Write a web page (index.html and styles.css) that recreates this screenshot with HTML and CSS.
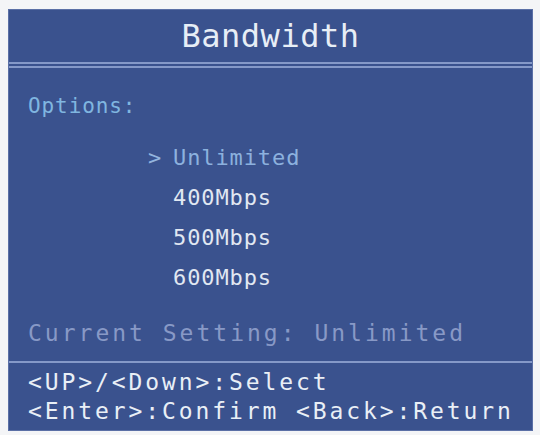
FILE: index.html
```html
<!DOCTYPE html>
<html lang="en">
<head>
    <meta charset="UTF-8">
    <meta name="viewport" content="width=device-width, initial-scale=1.0">
    <title>Bandwidth</title>
    <link rel="stylesheet" href="styles.css">
</head>
<body>

    <div class="menu-panel">
        <!-- Title bar -->
        <div class="menu-title">Bandwidth</div>

        <!-- Option list -->
        <div class="menu-body">
            <div class="options-label">Options:</div>
            <ul class="option-list">
                <li class="option selected"><span class="cursor">&gt;</span>Unlimited</li>
                <li class="option">400Mbps</li>
                <li class="option">500Mbps</li>
                <li class="option">600Mbps</li>
            </ul>
            <div class="current-setting">Current Setting: Unlimited</div>
        </div>

        <!-- Key hints -->
        <div class="menu-footer">
            <div>&lt;UP&gt;/&lt;Down&gt;:Select</div>
            <div>&lt;Enter&gt;:Confirm &lt;Back&gt;:Return</div>
        </div>
    </div>

</body>
</html>
```

FILE: styles.css
```css
body {
    margin: 0;
    padding: 0;
    background-color: #f4f5f7;
    font-family: "DejaVu Sans Mono", "Liberation Mono", monospace;
}

.menu-panel {
    margin: 9px 0 0 8px;
    width: 525px;
    height: 422px;
    box-sizing: border-box;
    background-color: #3a528e;
    border: 1px solid #5b70a6;
    display: flex;
    flex-direction: column;
}

.menu-title {
    height: 52px;
    line-height: 52px;
    text-align: center;
    font-size: 32px;
    letter-spacing: 0.5px;
    color: #e7eef6;
    border-bottom: 6px double #8599c8;
}

.menu-body {
    flex: 1;
    padding: 26px 0 0 19px;
}

.options-label {
    font-size: 21px;
    line-height: 24px;
    letter-spacing: 0.9px;
    color: #80b6e0;
}

.option-list {
    list-style: none;
    margin: 20px 0 0 0;
    padding: 0 0 0 145px;
}

.option {
    font-size: 22px;
    line-height: 40px;
    letter-spacing: 0.9px;
    color: #e1e8f2;
}

.option.selected {
    color: #8cb1de;
}

.cursor {
    display: inline-block;
    width: 25px;
    margin-left: -25px;
    color: #93b4de;
}

.current-setting {
    margin-top: 15px;
    font-size: 23px;
    line-height: 40px;
    letter-spacing: 3px;
    color: #8899c6;
}

.menu-footer {
    border-top: 2px solid #8599c8;
    padding: 5px 0 4px 19px;
    font-size: 23px;
    line-height: 29px;
    letter-spacing: 2.9px;
    color: #e9eff6;
}
```
